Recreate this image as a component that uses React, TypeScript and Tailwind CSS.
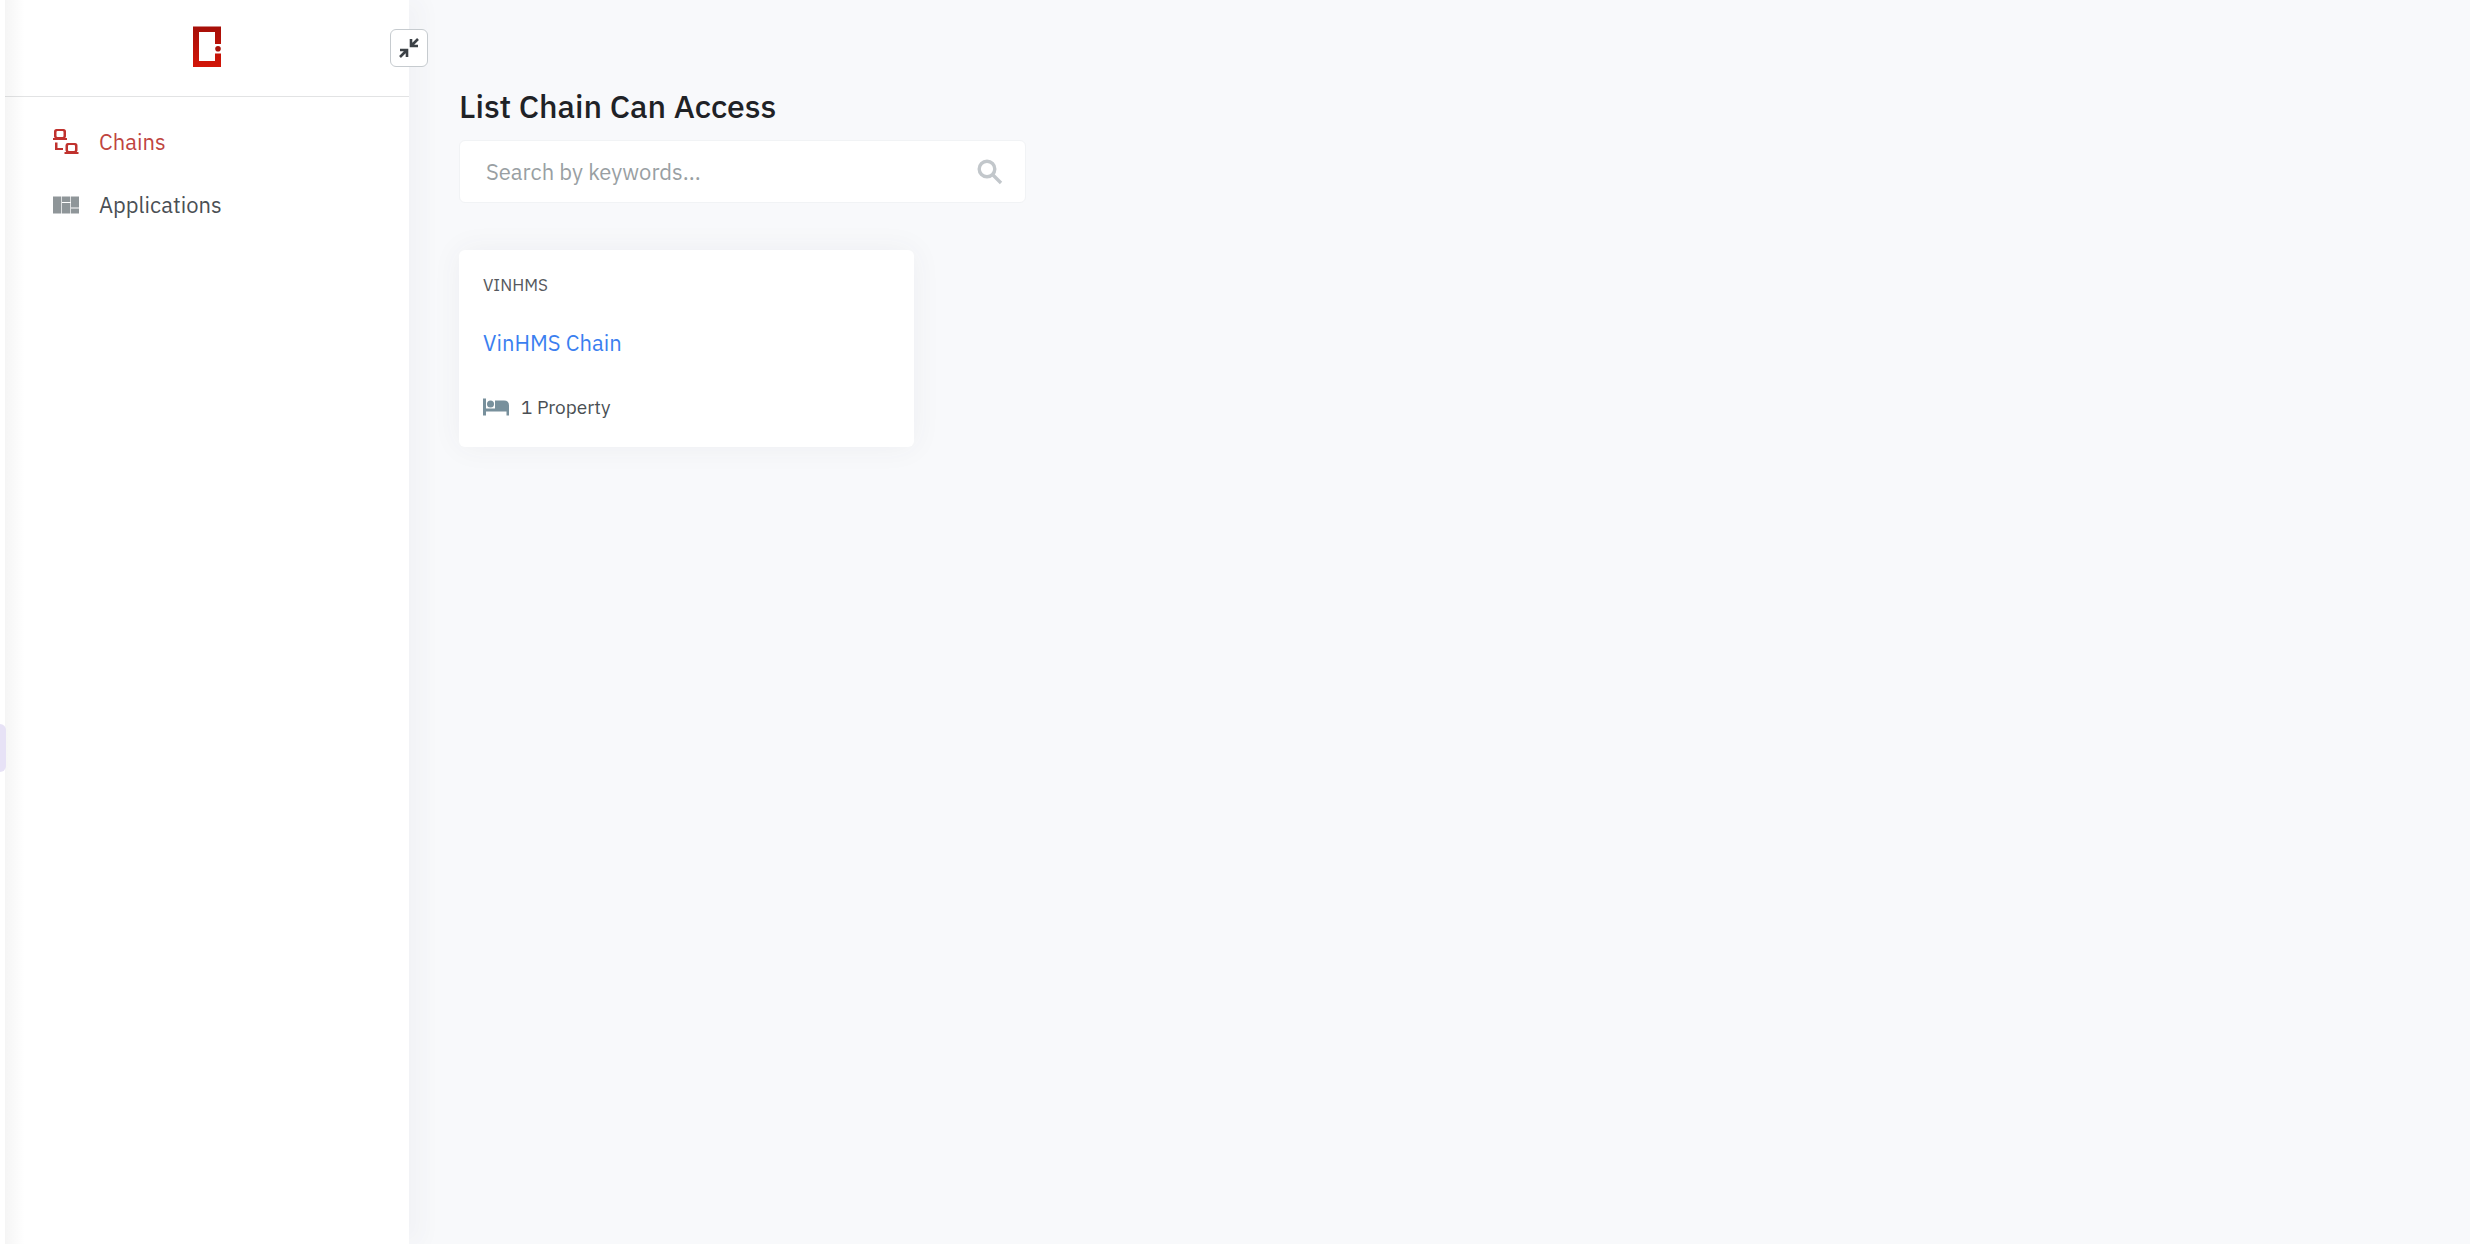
import React from 'react';

const LogoIcon = () => (
  <svg width="30" height="42" viewBox="0 0 30 42" aria-hidden="true">
    <defs>
      <linearGradient id="logo-red" x1="0" y1="0" x2="0" y2="42" gradientUnits="userSpaceOnUse">
        <stop offset="0" stopColor="#a50f08" />
        <stop offset="1" stopColor="#d41608" />
      </linearGradient>
    </defs>
    <path d="M1 0.5H29V18H23V6H7V35H23V27.5H29V41H1Z" fill="url(#logo-red)" />
    <circle cx="26" cy="22.7" r="2.8" fill="#a8130b" />
  </svg>
);

const ChainsIcon = () => (
  <svg width="26" height="26" viewBox="0 0 26 26" fill="#c0322e" aria-hidden="true">
    <path fillRule="evenodd" d="M3.500 0H10.500Q13 0 13 2.500V7.500L12.300 9H14V11H0V9H1.700L1 7.500V2.500Q1 0 3.500 0ZM4.500 2Q3.500 2 3.500 3V7Q3.500 8 4.500 8H9.500Q10.500 8 10.500 7V3Q10.500 2 9.500 2Z" />
    <path d="M2 13.500H4.500V19H10V21H2Z" />
    <path fillRule="evenodd" d="M14.500 14H22Q24.500 14 24.500 16.500V21.500L23.800 23H25.500V25H11.500V23H13.200L12.500 21.500V16.500Q12.500 14 14.500 14ZM16 16Q15 16 15 17V21Q15 22 16 22H21Q22 22 22 21V17Q22 16 21 16Z" />
  </svg>
);

const ApplicationsIcon = () => (
  <svg width="26" height="18" viewBox="0 0 26 18" fill="#8f9699" aria-hidden="true">
    <path d="M0 0.500H8.300V17.500H0ZM9 0.500H17.300V6H9ZM9 7H17.300V17.500H9ZM18 0.500H26V11.500H18ZM18 12.500H26V17.500H18Z" />
  </svg>
);

const BedIcon = () => (
  <svg width="26" height="18" viewBox="0 0 26 18" fill="#78909c" aria-hidden="true">
    <path d="M0 0.500H3V10.500H12V2.500H21Q26 2.500 26 7.500V17.500H23.500V13.500H3V17.500H0Z" />
    <circle cx="7.500" cy="6" r="3.500" />
  </svg>
);

const CollapseIcon = () => (
  <svg width="20" height="20" viewBox="0 0 20 20" fill="none" stroke="#3c4146" strokeWidth="2.6" aria-hidden="true">
    <path d="M19 1L12.500 7.500M12 1V8H19M1 19L7.500 12.500M1 12H8V19" />
  </svg>
);

const SearchIcon = () => (
  <svg width="26" height="26" viewBox="0 0 26 26" fill="none" stroke="#c2c7cb" strokeWidth="3.400" aria-hidden="true">
    <circle cx="10" cy="10" r="7.800" />
    <path d="M15.500 15.500L24 24" />
  </svg>
);

const NavItem = ({ icon, label, active = false }: { icon: React.ReactNode, label: string, active?: boolean }) => (
  <li>
    <a
      href="#"
      aria-current={active ? 'page' : undefined}
      className={`flex h-[63px] items-center gap-5 pl-12 text-[22px] ${active ? 'text-[#c0453f]' : 'text-[#4a4f54]'}`}
    >
      {icon}
      {label}
    </a>
  </li>
);

const Sidebar = () => (
  <aside className="relative z-10 ml-[5px] w-[404px] shrink-0 bg-white shadow-[14px_0_20px_rgba(60,70,80,0.03)]">
    <div className="flex h-[97px] justify-center border-b border-[#e2e3e4] pt-[26px]">
      <LogoIcon />
    </div>
    <button
      type="button"
      aria-label="Collapse menu"
      className="absolute top-[29px] -right-[19px] flex size-[38px] items-center justify-center rounded-md border border-[#c6cbcf] bg-white"
    >
      <CollapseIcon />
    </button>
    <nav className="pt-[13px]">
      <ul>
        <NavItem icon={<ChainsIcon />} label="Chains" active />
        <NavItem icon={<ApplicationsIcon />} label="Applications" />
      </ul>
    </nav>
    <div className="pointer-events-none absolute inset-y-0 left-0 w-5 bg-linear-to-r from-black/4 to-transparent" />
  </aside>
);

const SearchBox = () => (
  <label className="mt-[14px] flex h-[63px] w-[567px] items-center rounded-md border border-[#f1f3f5] bg-white pr-[22px] pl-[26px]">
    <input
      type="text"
      aria-label="Search by keywords"
      placeholder="Search by keywords..."
      className="min-w-0 flex-1 text-[22px] text-[#4a4f54] outline-none placeholder:text-[#999fa3]"
    />
    <SearchIcon />
  </label>
);

const ChainCard = ({ code, name, properties }: { code: string, name: string, properties: string }) => (
  <article className="mt-[47px] w-[455px] rounded-md bg-white px-6 pt-[23px] pb-[26px] shadow-[0_0_30px_rgba(60,70,80,0.06)]">
    <p className="text-[17px] leading-6 text-[#55595e]">{code}</p>
    <a href="#" className="mt-[30px] block text-[22px] leading-8 text-[#3b7ff0]">{name}</a>
    <p className="mt-[34px] flex items-center gap-3 text-[19px] leading-7 text-[#4a4f54]">
      <BedIcon />
      {properties}
    </p>
  </article>
);

export default function App() {
  return (
    <div className="relative flex min-h-screen overflow-hidden bg-[linear-gradient(to_right,white_5px,#f8f9fb_5px)] font-['IBM_Plex_Sans','Noto_Sans',sans-serif]">
      <div className="absolute top-[724px] left-0 z-20 h-12 w-[6px] rounded-r-md bg-[#e7e2f6]" />
      <Sidebar />
      <main className="flex-1 pt-[86px] pl-[50px]">
        <h1 className="text-[32px] leading-10 font-medium text-[#1f2226]">List Chain Can Access</h1>
        <SearchBox />
        <ChainCard code="VINHMS" name="VinHMS Chain" properties="1 Property" />
      </main>
    </div>
  );
}
